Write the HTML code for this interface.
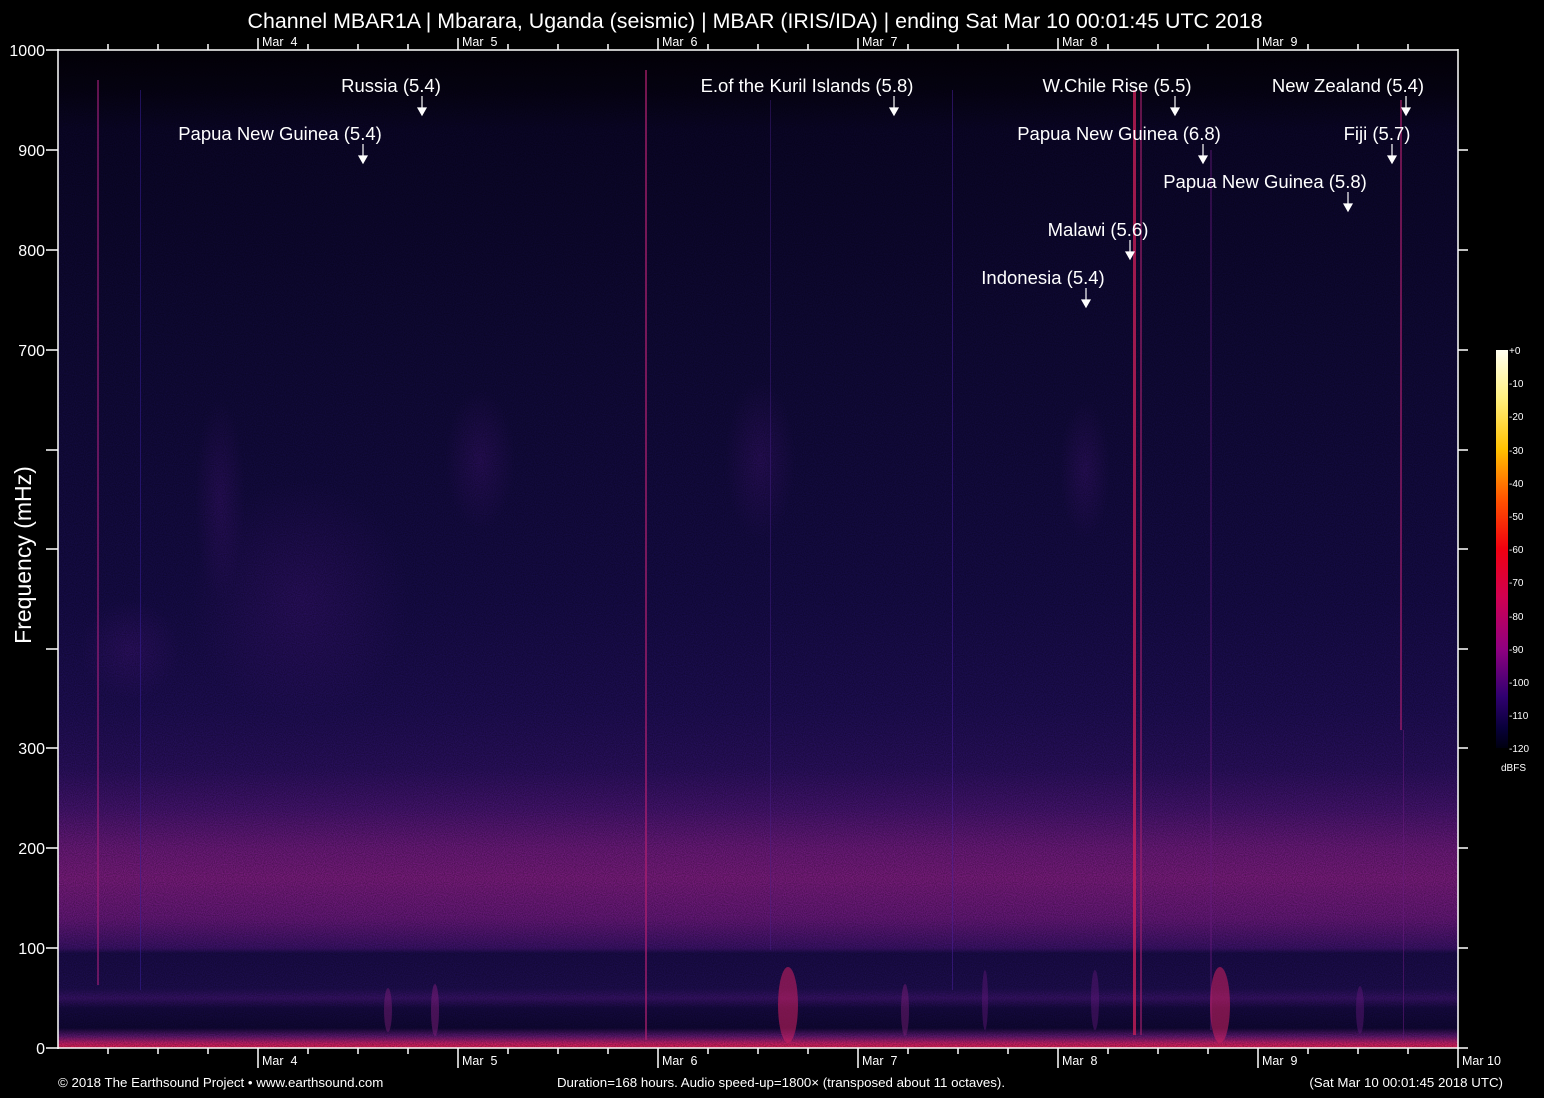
<!DOCTYPE html>
<html><head><meta charset="utf-8"><style>
html,body{margin:0;padding:0;background:#000;width:1544px;height:1098px;overflow:hidden}
svg{display:block}
text{font-family:"Liberation Sans",Arial,sans-serif;fill:#fff}
.pre text{white-space:pre}
</style></head><body>
<svg width="1544" height="1098" viewBox="0 0 1544 1098">
<defs>
<linearGradient id="bg" x1="0" y1="0" x2="0" y2="1">
<stop offset="0" stop-color="#030108"/>
<stop offset="0.04" stop-color="#060314"/>
<stop offset="0.08" stop-color="#0b0628"/>
<stop offset="0.3" stop-color="#100a38"/>
<stop offset="0.55" stop-color="#160c48"/>
<stop offset="0.66" stop-color="#1e0e54"/>
<stop offset="0.72" stop-color="#2a105e"/>
<stop offset="0.76" stop-color="#44146e"/>
<stop offset="0.8" stop-color="#6a1a7a"/>
<stop offset="0.83" stop-color="#781c7c"/>
<stop offset="0.87" stop-color="#641878"/>
<stop offset="0.9" stop-color="#3a1268"/>
<stop offset="0.905" stop-color="#1a0c4a"/>
<stop offset="0.94" stop-color="#1e0e50"/>
<stop offset="0.95" stop-color="#361266"/>
<stop offset="0.96" stop-color="#160a42"/>
<stop offset="0.98" stop-color="#100836"/>
<stop offset="0.988" stop-color="#5a1870"/>
<stop offset="0.995" stop-color="#c0206a"/>
<stop offset="1" stop-color="#e02050"/>
</linearGradient>
<radialGradient id="blob" cx="0.5" cy="0.5" r="0.5">
<stop offset="0" stop-color="#4a1680" stop-opacity="0.35"/>
<stop offset="1" stop-color="#4a1680" stop-opacity="0"/>
</radialGradient>
<linearGradient id="cb" x1="0" y1="0" x2="0" y2="1">
<stop offset="0" stop-color="#fffff0"/>
<stop offset="0.12" stop-color="#fff080"/>
<stop offset="0.25" stop-color="#ffc000"/>
<stop offset="0.38" stop-color="#ff5000"/>
<stop offset="0.5" stop-color="#f00010"/>
<stop offset="0.62" stop-color="#d00050"/>
<stop offset="0.75" stop-color="#900080"/>
<stop offset="0.87" stop-color="#300070"/>
<stop offset="0.95" stop-color="#08003a"/>
<stop offset="1" stop-color="#000010"/>
</linearGradient>
<filter id="nz" x="0" y="0" width="100%" height="100%">
<feTurbulence type="fractalNoise" baseFrequency="0.9" numOctaves="1" seed="3"/>
<feColorMatrix values="0 0 0 0 0  0 0 0 0 0  0 0 0 0 0  0 0 0 -1.2 0.9"/>
</filter>
</defs>
<rect x="58" y="50" width="1400" height="998" fill="url(#bg)"/>
<ellipse cx="300" cy="600" rx="110" ry="120" fill="url(#blob)"/>
<ellipse cx="220" cy="500" rx="25" ry="100" fill="url(#blob)"/>
<ellipse cx="480" cy="460" rx="35" ry="70" fill="url(#blob)"/>
<ellipse cx="760" cy="460" rx="35" ry="80" fill="url(#blob)"/>
<ellipse cx="1085" cy="470" rx="25" ry="70" fill="url(#blob)"/>
<ellipse cx="130" cy="650" rx="50" ry="50" fill="url(#blob)"/>
<rect x="58" y="50" width="1400" height="998" filter="url(#nz)" opacity="0.5"/>
<g>
<rect x="97" y="80" width="2" height="905" fill="#a0207a" opacity="0.6"/>
<rect x="140" y="90" width="1" height="900" fill="#3a20a0" opacity="0.5"/>
<rect x="645" y="70" width="2" height="970" fill="#b02070" opacity="0.65"/>
<rect x="770" y="100" width="1" height="850" fill="#4a2090" opacity="0.4"/>
<rect x="952" y="90" width="1" height="900" fill="#4a20a0" opacity="0.5"/>
<rect x="1133" y="90" width="3" height="945" fill="#d0205a" opacity="0.75"/>
<rect x="1140" y="90" width="2" height="945" fill="#a0206a" opacity="0.6"/>
<rect x="1210" y="150" width="2" height="880" fill="#6a1a80" opacity="0.4"/>
<rect x="1400" y="100" width="2" height="630" fill="#b02070" opacity="0.6"/>
<rect x="1403" y="730" width="1" height="310" fill="#6a1a80" opacity="0.5"/>
<ellipse cx="788" cy="1005" rx="10" ry="38" fill="#d02060" opacity="0.55"/>
<ellipse cx="1220" cy="1005" rx="10" ry="38" fill="#d02060" opacity="0.55"/>
<ellipse cx="435" cy="1010" rx="4" ry="26" fill="#8a2080" opacity="0.45"/>
<ellipse cx="388" cy="1010" rx="4" ry="22" fill="#8a2080" opacity="0.4"/>
<ellipse cx="905" cy="1010" rx="4" ry="26" fill="#8a2080" opacity="0.4"/>
<ellipse cx="985" cy="1000" rx="3" ry="30" fill="#6a1a80" opacity="0.4"/>
<ellipse cx="1095" cy="1000" rx="4" ry="30" fill="#6a1a80" opacity="0.4"/>
<ellipse cx="1360" cy="1010" rx="4" ry="24" fill="#6a1a80" opacity="0.4"/>
</g>
<g stroke="#fff" stroke-width="1.5" fill="none">
<path d="M58 49V1049M1458 49V1049M46 50H1458M46 1048H1458"/>
<path d="M46 150H58M46 250H58M46 350H58M46 450H58M46 549H58M46 649H58M46 748H58M46 848H58M46 948H58"/>
<path d="M1458 150H1468M1458 250H1468M1458 350H1468M1458 450H1468M1458 549H1468M1458 649H1468M1458 748H1468M1458 848H1468M1458 948H1468M1458 1048H1468"/>
<path d="M108 50V44M158 50V44M208 50V44M258 50V38M308 50V44M358 50V44M408 50V44M458 50V38M508 50V44M558 50V44M608 50V44M658 50V38M708 50V44M758 50V44M808 50V44M858 50V38M908 50V44M958 50V44M1008 50V44M1058 50V38M1108 50V44M1158 50V44M1208 50V44M1258 50V38M1308 50V44M1358 50V44M1408 50V44"/>
<path d="M108 1048V1054M158 1048V1054M208 1048V1054M258 1048V1068M308 1048V1054M358 1048V1054M408 1048V1054M458 1048V1068M508 1048V1054M558 1048V1054M608 1048V1054M658 1048V1068M708 1048V1054M758 1048V1054M808 1048V1054M858 1048V1068M908 1048V1054M958 1048V1054M1008 1048V1054M1058 1048V1068M1108 1048V1054M1158 1048V1054M1208 1048V1054M1258 1048V1068M1308 1048V1054M1358 1048V1054M1408 1048V1054M1458 1048V1068"/>
</g>
<text x="755" y="28" font-size="21.3" text-anchor="middle" textLength="1015" lengthAdjust="spacingAndGlyphs">Channel MBAR1A | Mbarara, Uganda (seismic) | MBAR (IRIS/IDA) | ending Sat Mar 10 00:01:45 UTC 2018</text>
<g font-size="12.5" class="pre">
<text x="262" y="46">Mar  4</text><text x="462" y="46">Mar  5</text><text x="662" y="46">Mar  6</text><text x="862" y="46">Mar  7</text><text x="1062" y="46">Mar  8</text><text x="1262" y="46">Mar  9</text>
<text x="262" y="1065">Mar  4</text><text x="462" y="1065">Mar  5</text><text x="662" y="1065">Mar  6</text><text x="862" y="1065">Mar  7</text><text x="1062" y="1065">Mar  8</text><text x="1262" y="1065">Mar  9</text><text x="1462" y="1065">Mar 10</text>
</g>
<g font-size="16" text-anchor="end">
<text x="45" y="56">1000</text><text x="45" y="156">900</text><text x="45" y="256">800</text><text x="45" y="356">700</text><text x="45" y="754">300</text><text x="45" y="854">200</text><text x="45" y="954">100</text><text x="45" y="1054">0</text>
</g>
<text transform="translate(31,555) rotate(-90)" font-size="23" text-anchor="middle">Frequency (mHz)</text>
<g font-size="18.5" text-anchor="middle">
<text x="391" y="92">Russia (5.4)</text>
<text x="280" y="140">Papua New Guinea (5.4)</text>
<text x="807" y="92">E.of the Kuril Islands (5.8)</text>
<text x="1117" y="92">W.Chile Rise (5.5)</text>
<text x="1348" y="92">New Zealand (5.4)</text>
<text x="1119" y="140">Papua New Guinea (6.8)</text>
<text x="1377" y="140">Fiji (5.7)</text>
<text x="1265" y="188">Papua New Guinea (5.8)</text>
<text x="1098" y="236">Malawi (5.6)</text>
<text x="1043" y="284">Indonesia (5.4)</text>
</g>
<g stroke="#fff" stroke-width="1.2" fill="#fff">
<path d="M422 96V108"/><path d="M418 108H426L422 115Z"/>
<path d="M363 144V156"/><path d="M359 156H367L363 163Z"/>
<path d="M894 96V108"/><path d="M890 108H898L894 115Z"/>
<path d="M1175 96V108"/><path d="M1171 108H1179L1175 115Z"/>
<path d="M1406 96V108"/><path d="M1402 108H1410L1406 115Z"/>
<path d="M1203 144V156"/><path d="M1199 156H1207L1203 163Z"/>
<path d="M1392 144V156"/><path d="M1388 156H1396L1392 163Z"/>
<path d="M1348 192V204"/><path d="M1344 204H1352L1348 211Z"/>
<path d="M1130 240V252"/><path d="M1126 252H1134L1130 259Z"/>
<path d="M1086 288V300"/><path d="M1082 300H1090L1086 307Z"/>
</g>
<rect x="1496" y="350" width="12" height="398" fill="url(#cb)"/>
<g font-size="10" fill="#ddd">
<text x="1509" y="354">+0</text><text x="1509" y="387">-10</text><text x="1509" y="420">-20</text><text x="1509" y="454">-30</text><text x="1509" y="487">-40</text><text x="1509" y="520">-50</text><text x="1509" y="553">-60</text><text x="1509" y="586">-70</text><text x="1509" y="620">-80</text><text x="1509" y="653">-90</text><text x="1509" y="686">-100</text><text x="1509" y="719">-110</text><text x="1509" y="752">-120</text>
<text x="1501" y="771">dBFS</text>
</g>
<g font-size="13.3">
<text x="58" y="1087">© 2018 The Earthsound Project • www.earthsound.com</text>
<text x="781" y="1087" text-anchor="middle">Duration=168 hours. Audio speed-up=1800× (transposed about 11 octaves).</text>
<text x="1503" y="1087" text-anchor="end">(Sat Mar 10 00:01:45 2018 UTC)</text>
</g>
</svg>
</body></html>
